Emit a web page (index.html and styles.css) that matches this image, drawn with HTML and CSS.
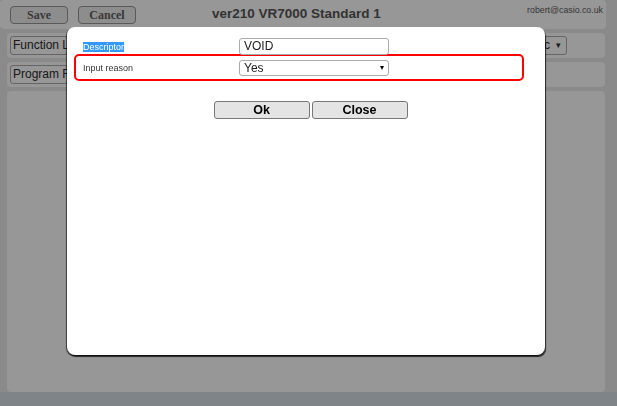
FILE: index.html
```html
<!DOCTYPE html>
<html lang="en">
<head>
    <meta charset="UTF-8">
    <title>Function Editor</title>
    <link rel="stylesheet" href="styles.css">
</head>
<body>
    <div class="page">
        <div class="header panel">
            <button class="btn-top">Save</button>
            <button class="btn-top">Cancel</button>
            <h1 class="title">ver210 VR7000 Standard 1</h1>
            <span class="user">robert@casio.co.uk</span>
        </div>

        <div class="row panel">
            <span class="fake-select wide">Function L</span>
            <span class="fake-select narrow">c <span class="arrow">▾</span></span>
        </div>

        <div class="row panel">
            <span class="fake-select wide">Program F</span>
        </div>

        <div class="workspace panel"></div>
        <div class="footer"></div>
    </div>

    <div class="overlay"></div>

    <div class="modal">
        <div class="field first">
            <span class="label"><span class="selected">Descriptor</span></span>
            <span class="input">VOID</span>
        </div>
        <div class="field highlight">
            <span class="label">Input reason</span>
            <span class="input select">Yes <span class="arrow">▾</span></span>
        </div>
        <div class="actions">
            <button class="btn-modal">Ok</button>
            <button class="btn-modal">Close</button>
        </div>
    </div>
</body>
</html>
```

FILE: styles.css
```css
html, body {
    margin: 0;
    height: 100%;
}
body {
    font-family: "Liberation Sans", Arial, sans-serif;
    background: #e6e6e6;
    overflow: hidden;
}
.page {
    display: flex;
    flex-direction: column;
    height: 406px;
}
.panel {
    background: #fcfcfc;
    border-radius: 4px;
    margin: 0 12px 4px 7px;
    box-sizing: border-box;
}
.header {
    display: flex;
    align-items: center;
    height: 29px;
    margin: 0 11px 4px 0;
    padding: 1px 0 0 10px;
    position: relative;
}
.btn-top {
    font-family: "Liberation Serif", "Times New Roman", serif;
    font-weight: bold;
    font-size: 12px;
    color: #5e5e5e;
    background: #ececec;
    border: 1px solid #949494;
    border-radius: 4px;
    width: 58px;
    height: 18px;
    padding: 0;
    margin-right: 10px;
}
.title {
    flex: 1;
    margin: -3px 0 0 66px;
    font-size: 13.5px;
    color: #555;
}
.user {
    position: absolute;
    right: 3px;
    top: 5px;
    font-size: 8.8px;
    color: #5a5a5a;
}
.row {
    display: flex;
    align-items: center;
    justify-content: space-between;
    height: 25px;
    padding: 0 38px 0 3px;
}
.fake-select {
    position: relative;
    box-sizing: border-box;
    height: 19px;
    line-height: 17px;
    border: 1px solid #a8a8a8;
    border-radius: 3px;
    background: #fcfcfc;
    font-size: 12px;
    color: #2a2a2a;
    padding: 0 2px;
    white-space: nowrap;
}
.fake-select.wide {
    width: 58px;
}
.fake-select.narrow {
    width: 30px;
    padding-right: 16px;
    text-align: right;
}
.fake-select .arrow {
    font-size: 9px;
    position: absolute;
    right: 5px;
    top: 0;
}
.workspace {
    height: 301px;
    margin-bottom: 0;
}
.footer {
    flex: 1;
    background: #d4dce3;
}
.overlay {
    position: fixed;
    inset: 0;
    background: rgba(0, 0, 0, 0.4);
}
.modal {
    position: fixed;
    left: 67px;
    top: 27px;
    width: 478px;
    height: 328px;
    box-sizing: border-box;
    background: #fff;
    border-radius: 8px;
    box-shadow: 1px 2px 1px rgba(0, 0, 0, 0.75), -1px 1px 1px rgba(0, 0, 0, 0.6);
    padding: 9px 21px 0 7px;
    font-size: 9px;
    color: #333;
}
.field {
    display: flex;
    align-items: center;
    height: 17px;
    padding-left: 7px;
    border: 2px solid transparent;
}
.field.first {
    margin-bottom: -3px;
}
.field.highlight {
    height: 23px;
    border-color: #ff0000;
    border-radius: 5px;
}
.label {
    width: 156px;
}
.selected {
    background: #3399ff;
    color: #fff;
}
.input {
    position: relative;
    box-sizing: border-box;
    width: 150px;
    height: 17px;
    line-height: 15px;
    border: 1px solid #aaa;
    border-radius: 3px;
    padding: 0 4px;
    font-size: 12px;
    color: #222;
}
.input.select {
    height: 16px;
    line-height: 14px;
}
.input .arrow {
    position: absolute;
    right: 4px;
    top: 0;
    font-size: 8px;
    color: #000;
}
.actions {
    display: flex;
    justify-content: center;
    gap: 2px;
    margin: 20px 0 0 23px;
}
.btn-modal {
    width: 96px;
    height: 18px;
    padding: 0;
    font-family: "Liberation Sans", Arial, sans-serif;
    font-weight: bold;
    font-size: 12.5px;
    color: #000;
    background: #e4e4e4;
    border: 1px solid #777;
    border-radius: 3px;
}
```
